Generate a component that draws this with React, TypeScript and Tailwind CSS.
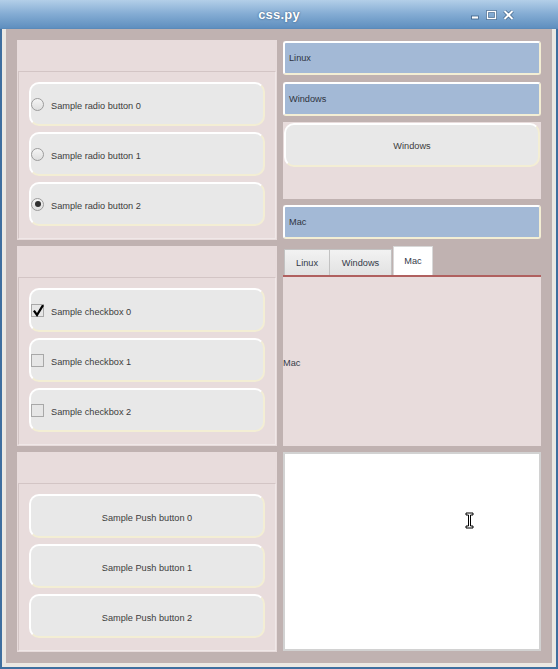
import React from "react";

const font = { fontFamily: '"Liberation Sans", Arial, sans-serif' };

function Radio({ checked }: { checked?: boolean }) {
  return (
    <div className="w-[13px] h-[13px] rounded-full border border-[#9c9c9c] bg-gradient-to-b from-[#f4f4f4] to-[#dedede] flex items-center justify-center shrink-0">
      {checked && <div className="w-[6px] h-[6px] rounded-full bg-[#303030]" />}
    </div>
  );
}

function Check({ checked }: { checked?: boolean }) {
  return (
    <div className="relative w-[13px] h-[13px] border border-[#a8a8a8] bg-[#e6e6e6] shrink-0">
      {checked && (
        <svg className="absolute left-[1px] top-[0px]" width="11" height="12" viewBox="0 0 11 12">
          <path d="M1.5 6.5 L4 10 L9.5 1" fill="none" stroke="#000" strokeWidth="2.2" strokeLinecap="square" />
        </svg>
      )}
    </div>
  );
}

function Item({ children, center }: { children: React.ReactNode; center?: boolean }) {
  return (
    <div
      className={`h-[44px] rounded-[10px] border-2 border-t-white border-l-white border-r-[#f3eed4] border-b-[#f3eed4] bg-[#e8e8e8] flex items-center text-[9.2px] text-[#3c3c3c] ${
        center ? "justify-center" : "gap-[7px]"
      }`}
    >
      {children}
    </div>
  );
}

function Group({ children }: { children: React.ReactNode }) {
  return (
    <div className="bg-[#e8dcdc] pt-[31px] px-[1px] pb-[1px] flex flex-col">
      <div className="flex-1 border border-[#d3c5c5] border-b-[#f0e8e8] border-r-[#f0e8e8] px-[10px] pt-[10px] flex flex-col gap-[6px]">
        {children}
      </div>
    </div>
  );
}

function BlueTab({ label }: { label: string }) {
  return (
    <div className="h-[34px] rounded-[3px] border-2 border-t-white border-l-white border-r-[#f3eed4] border-b-[#f3eed4] bg-[#a3b9d6] flex items-center pl-[4px] text-[9.2px] text-[#2f3440]">
      <span className="relative top-[1px]">{label}</span>
    </div>
  );
}

function TitleButtons() {
  return (
    <div className="absolute left-[470px] top-[10px] flex items-end gap-[6px]">
      <svg width="10" height="10" viewBox="0 0 10 10">
        <rect x="1.5" y="6" width="7" height="3" fill="#fff" stroke="#3b5f85" strokeWidth="0.8" />
      </svg>
      <svg width="11" height="10" viewBox="0 0 11 10">
        <rect x="1.5" y="1.5" width="8" height="7" fill="none" stroke="#3b5f85" strokeWidth="2.6" />
        <rect x="1.5" y="1.5" width="8" height="7" fill="none" stroke="#fff" strokeWidth="1.4" />
      </svg>
      <svg width="11" height="10" viewBox="0 0 11 10">
        <path d="M1.5 1 L9.5 9 M9.5 1 L1.5 9" stroke="#3b5f85" strokeWidth="3.4" />
        <path d="M1.5 1 L9.5 9 M9.5 1 L1.5 9" stroke="#fff" strokeWidth="2" />
      </svg>
    </div>
  );
}

export default function App() {
  return (
    <div className="w-[558px] h-[669px] flex flex-col bg-[#3f6f9f] overflow-hidden" style={font}>
      <div className="relative h-[29px] shrink-0 bg-gradient-to-b from-[#b3cfe8] via-[#84acd3] to-[#5f8fbf] border-b border-[#5b8ab9] flex items-center justify-center">
        <span className="text-white font-bold text-[13px] [text-shadow:0_0_2px_#2c4c70] tracking-[0.2px] relative top-[1px]">css.py</span>
        <TitleButtons />
      </div>
      <div className="flex-1 mx-[2px] mb-[2px] px-[4px] pb-[4px] bg-[#ebe8e3] flex">
        <div className="flex-1 bg-[#c0b2b1] p-[11px] grid grid-cols-[260px_258px] grid-rows-[200px_200px_200px] gap-[6px]">
          <Group>
            {[0, 1, 2].map((i) => (
              <Item key={i}>
                <Radio checked={i === 2} />
                <span className="relative top-[3px]">Sample radio button {i}</span>
              </Item>
            ))}
          </Group>

          <div className="flex flex-col py-[1px] gap-[7px]">
            <BlueTab label="Linux" />
            <BlueTab label="Windows" />
            <div className="h-[77px] -mt-[1px] bg-[#e8dcdc] px-[1px] pt-[1px]">
              <Item center>
                <span className="relative top-[2px]">Windows</span>
              </Item>
            </div>
            <div className="-mt-[1px]">
              <BlueTab label="Mac" />
            </div>
          </div>

          <Group>
            {[0, 1, 2].map((i) => (
              <Item key={i}>
                <Check checked={i === 0} />
                <span className="relative top-[3px]">Sample checkbox {i}</span>
              </Item>
            ))}
          </Group>

          <div className="flex flex-col">
            <div className="h-[29px] flex items-end pl-[1px] text-[9.2px] text-[#333a48]">
              <div className="h-[26px] w-[46px] border border-[#c2c2c2] border-b-0 bg-gradient-to-b from-[#f2f2f2] to-[#e2e2e2] flex items-center justify-center pt-[2px]">
                Linux
              </div>
              <div className="h-[26px] w-[62px] border border-l-0 border-[#c2c2c2] border-b-0 bg-gradient-to-b from-[#f2f2f2] to-[#e2e2e2] flex items-center justify-center pt-[2px]">
                Windows
              </div>
              <div className="h-[29px] w-[40px] ml-[1px] border border-[#d8d8d8] border-b-0 bg-white flex items-center justify-center pt-[1px]">
                Mac
              </div>
            </div>
            <div className="h-[2px] bg-[#b0605f]" />
            <div className="flex-1 bg-[#e8dcdc] flex items-center text-[9.2px] text-[#333a48] pt-[4px]">Mac</div>
          </div>

          <Group>
            {[0, 1, 2].map((i) => (
              <Item key={i} center>
                <span className="relative top-[3px]">Sample Push button {i}</span>
              </Item>
            ))}
          </Group>

          <div className="relative h-[199px] bg-white border-2 border-[#d2d2d2]">
            <svg className="absolute left-[180px] top-[58px]" width="9" height="17" viewBox="0 0 9 17">
              <path
                d="M1 1 H8 V3 H5.5 V14 H8 V16 H1 V14 H3.5 V3 H1 Z"
                fill="#fff"
                stroke="#000"
                strokeWidth="1"
              />
            </svg>
          </div>
        </div>
      </div>
    </div>
  );
}
